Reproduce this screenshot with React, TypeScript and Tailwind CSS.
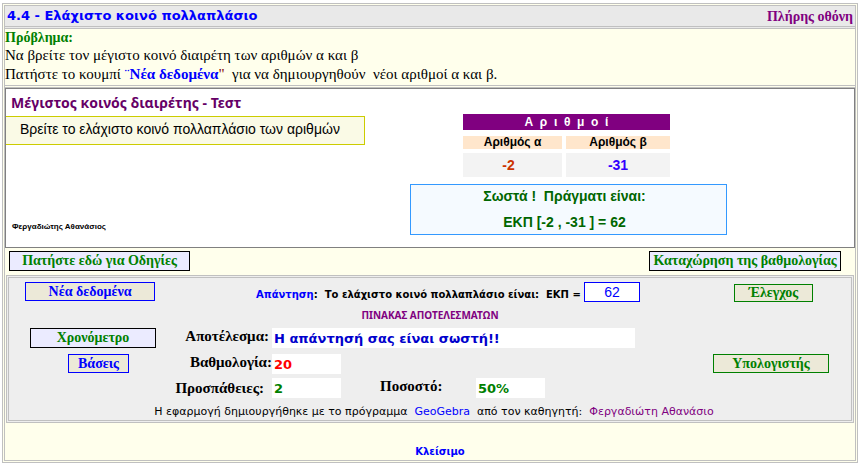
import type { ReactNode } from 'react'

const serif = "font-['Liberation_Serif',serif]"
const verdana = "font-['DejaVu_Sans',sans-serif]"
const arial = "font-['Liberation_Sans',sans-serif]"
const tahoma = "font-['Noto_Sans',sans-serif]"

function Button({ className, children }: { className: string; children: ReactNode }) {
  return (
    <button type="button" className={`${serif} block border text-center text-[14px] leading-4 font-bold whitespace-nowrap ${className}`}>
      {children}
    </button>
  )
}

function Field({ id, value, className }: { id: string; value: string; className: string }) {
  return (
    <input
      id={id}
      readOnly
      defaultValue={value}
      className={`${verdana} h-5 bg-white px-0.5 text-[13px] font-bold outline-none ${className}`}
    />
  )
}

function Worksheet() {
  return (
    <section className="flex h-[160px] items-start border border-[#808080] bg-white">
      <div className="flex h-full w-[359px] flex-col">
        <h2 className={`${tahoma} h-[27px] pt-1 pl-[5px] text-[14px] leading-5 font-bold text-[#660066]`}>
          Μέγιστος κοινός διαιρέτης - Τεστ
        </h2>
        <p className={`${arial} h-[29px] border border-l-0 border-[#cccc00] bg-[#fafae6] pl-3.5 text-[14px] leading-6 whitespace-nowrap text-black`}>
          Βρείτε το ελάχιστο κοινό πολλαπλάσιο των αριθμών
        </p>
        <p className={`${arial} mt-auto mb-3.5 pl-1.5 text-[8px] leading-3 font-bold text-black`}>Φεργαδιώτης Αθανάσιος</p>
      </div>

      <div className="ml-[45px] flex w-[317px] flex-col items-center pt-[25px]">
        <table className={`${arial} mr-1 w-[215px] border-separate border-spacing-1 text-center font-bold`}>
          <caption className="mx-1 mb-0.5 h-4 bg-[#800080] text-[12px] leading-4 text-white">
            Α&nbsp; ρ&nbsp; ι&nbsp; θ&nbsp; μ&nbsp; ο&nbsp; ί
          </caption>
          <thead>
            <tr>
              <th className="h-[13px] w-[99px] bg-[#ffe6cc] p-0 text-[12px] leading-[13px] text-black">Αριθμός α</th>
              <th className="h-[13px] bg-[#ffe6cc] p-0 text-[12px] leading-[13px] text-black">Αριθμός β</th>
            </tr>
          </thead>
          <tbody>
            <tr>
              <td className="h-6 bg-[#f3f3f3] p-0 pr-2 text-[14px] leading-6 text-[#cc3300]">-2</td>
              <td className="h-6 bg-[#f3f3f3] p-0 text-[14px] leading-6 text-[#3300ff]">-31</td>
            </tr>
          </tbody>
        </table>
        <div className={`${arial} mt-[3px] h-[51px] w-full border border-[#3399ff] bg-[#f5faff] pr-2 text-center text-[14px] font-bold text-[#006600]`}>
          <p className="pt-px leading-5">Σωστά !&nbsp; Πράγματι είναι:</p>
          <p className="pt-1.5 leading-5">ΕΚΠ [-2 , -31 ] = 62</p>
        </div>
      </div>
    </section>
  )
}

function Results() {
  return (
    <section className="mx-px h-[148px] border-[3px] border-double border-[#c0c0c0] bg-[#eeeeee] text-black">
      <div className="flex items-start pt-1">
        <div className="w-[160px] pl-4">
          <Button className="h-[19px] w-[130px] border-[#0000ff] bg-[#ece9d8] text-[#0000ff]">Νέα δεδομένα</Button>
        </div>
        <div className="flex flex-1 items-center pl-[87px]">
          <label htmlFor="answer" className={`${verdana} pt-1 text-[10px] font-bold whitespace-nowrap`}>
            <span className="text-[#0000ff]">Απάντηση</span>:&nbsp; Το ελάχιστο κοινό πολλαπλάσιο είναι:&nbsp; ΕΚΠ =
          </label>
          <input
            id="answer"
            defaultValue="62"
            className={`${arial} ml-auto h-5 w-14 border border-[#0000ff] bg-white text-center text-[14px] text-[#0000ff] outline-none`}
          />
        </div>
        <div className="w-[211px] pt-0.5 pl-[94px]">
          <Button className="h-[18px] w-[79px] border-[#008000] bg-[#ece9d8] text-[#008000]">Έλεγχος</Button>
        </div>
      </div>

      <h3 className={`${tahoma} h-[26px] pt-[5px] text-center text-[10px] leading-4 font-bold text-[#800080]`}>ΠΙΝΑΚΑΣ ΑΠΟΤΕΛΕΣΜΑΤΩΝ</h3>

      <div className="flex items-start">
        <div className="w-[160px] pl-[21px]">
          <Button className="h-5 w-[126px] border-black bg-[#ebebff] text-[#008000]">Χρονόμετρο</Button>
        </div>
        <label htmlFor="result" className={`${serif} w-[103px] pr-[3px] text-right text-[15px] leading-4 font-bold`}>Αποτέλεσμα:</label>
        <Field id="result" value="Η απάντησή σας είναι σωστή!!" className="w-[363px] text-[#0000cc]" />
      </div>

      <div className="flex items-start pt-1.5">
        <div className="w-[160px] pl-[59px]">
          <Button className="h-[19px] w-[61px] border-[#0000ff] bg-[#ece9d8] text-[#0000ff]">Βάσεις</Button>
        </div>
        <label htmlFor="score" className={`${serif} w-[103px] text-right text-[15px] leading-4 font-bold`}>Βαθμολογία:</label>
        <Field id="score" value="20" className="w-[69px] text-[#ff0000]" />
        <Button className="mr-[22px] ml-auto h-[19px] w-[116px] border-[#008000] bg-[#ece9d8] text-[#008000]">Υπολογιστής</Button>
      </div>

      <div className="flex items-start pt-1 pl-[160px]">
        <label htmlFor="tries" className={`${serif} w-[103px] pr-2 text-right text-[15px] leading-5 font-bold`}>Προσπάθειες:</label>
        <Field id="tries" value="2" className="w-[69px] text-[#008000]" />
        <label htmlFor="percent" className={`${serif} w-[135px] pl-[39px] text-[15px] leading-4 font-bold`}>Ποσοστό:</label>
        <Field id="percent" value="50%" className="w-[69px] text-[#008000]" />
      </div>

      <p className={`${verdana} pt-1.5 pl-2 text-center text-[11px] leading-4`}>
        Η εφαρμογή δημιουργήθηκε με το πρόγραμμα&nbsp;{' '}
        <a href="#" className="text-[#0000ff]">GeoGebra</a>
        &nbsp; από τον καθηγητή:&nbsp;{' '}
        <a href="#" className="text-[#800080]">Φεργαδιώτη Αθανάσιο</a>
      </p>
    </section>
  )
}

export default function App() {
  return (
    <div className="bg-white pt-[3px] pr-px pb-0.5 pl-0.5">
      <main className="border-[3px] border-double border-[#c0c0c0] bg-[#ffffec]">
        <header className="flex h-[23px] items-center justify-between border-b-[3px] border-double border-[#c0c0c0] bg-[#e9e9e9] pr-0.5 pl-0.5">
          <h1 className={`${verdana} text-[13px] font-bold text-[#0000ff]`}>4.4 - Ελάχιστο κοινό πολλαπλάσιο</h1>
          <a href="#" className={`${serif} text-[14px] font-bold text-[#800080]`}>Πλήρης οθόνη</a>
        </header>

        <div className={`${serif} h-[59px] border-b-[3px] border-double border-[#c0c0c0] text-[15px] leading-[19px] text-black`}>
          <p className="text-[14px] leading-[17px] font-bold text-[#008000]">Πρόβλημα:</p>
          <p>Να βρείτε τον μέγιστο κοινό διαιρέτη των αριθμών α και β</p>
          <p>
            Πατήστε το κουμπί <span className="text-[#0000ff]">¨<b>Νέα δεδομένα</b></span>
            <span className="text-[#800000]">"</span>&nbsp; για να δημιουργηθούν&nbsp; νέοι αριθμοί α και β.
          </p>
        </div>

        <Worksheet />

        <div className="flex justify-between pt-[3px] pr-3.5 pb-1 pl-1">
          <Button className="h-5 w-[181px] border-black bg-[#ebebff] text-[#008000]">Πατήστε εδώ για Οδηγίες</Button>
          <Button className="h-5 w-[192px] border-black bg-[#ebebff] text-[#008000]">Καταχώρηση της βαθμολογίας</Button>
        </div>

        <Results />

        <footer className="flex h-[37px] items-end justify-center pl-5">
          <a href="#" className={`${verdana} text-[10px] leading-4 font-bold text-[#0000ff]`}>Κλείσιμο</a>
        </footer>
      </main>
    </div>
  )
}
